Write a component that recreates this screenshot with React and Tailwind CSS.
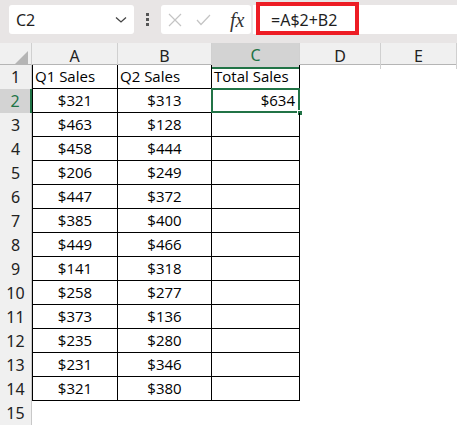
import React from 'react';

const data = [
  ['$321', '$313'],
  ['$463', '$128'],
  ['$458', '$444'],
  ['$206', '$249'],
  ['$447', '$372'],
  ['$385', '$400'],
  ['$449', '$466'],
  ['$141', '$318'],
  ['$258', '$277'],
  ['$373', '$136'],
  ['$235', '$280'],
  ['$231', '$346'],
  ['$321', '$380'],
];

const cols = ['A', 'B', 'C', 'D', 'E'];
const ui = { fontFamily: '"Noto Sans", "Open Sans", sans-serif' };
const cellFont = { fontFamily: '"Open Sans", "Noto Sans", sans-serif' };

function FormulaBar() {
  return (
    <div className="relative flex h-[43px] items-start bg-[#e8e5e5] pt-[5px]">
      <div className="ml-[9px] flex h-[29px] w-[125px] items-center justify-between rounded-[3px] bg-white pl-[7px] pr-[7px]">
        <span className="text-[16px] text-[#1f1f1f]" style={ui}>C2</span>
        <svg width="12" height="8" viewBox="0 0 12 8" fill="none" stroke="#444" strokeWidth="1.3">
          <path d="M1 1.5 L6 6 L11 1.5" />
        </svg>
      </div>
      <div className="flex h-[29px] w-[27px] flex-col items-center justify-center gap-[2px]">
        <span className="h-[3px] w-[3px] bg-[#555]"></span>
        <span className="h-[3px] w-[3px] bg-[#555]"></span>
        <span className="h-[3px] w-[3px] bg-[#555]"></span>
      </div>
      <div className="flex h-[29px] w-[90px] items-center rounded-[3px] bg-white pl-[7px]">
        <svg width="14" height="14" viewBox="0 0 14 14" stroke="#c4c4c4" strokeWidth="1.2">
          <path d="M1 1 L13 13 M13 1 L1 13" />
        </svg>
        <svg className="ml-[14px]" width="15" height="12" viewBox="0 0 15 12" fill="none" stroke="#c4c4c4" strokeWidth="1.2">
          <path d="M1 6 L5 10.5 L14 1" />
        </svg>
        <span className="ml-[19px] text-[20px] italic leading-none text-[#333]" style={{ fontFamily: '"Liberation Serif", serif' }}>
          fx
        </span>
      </div>
      <div className="ml-[2px] flex h-[29px] flex-1 items-center bg-white pl-[18px]">
        <span className="text-[16px] text-[#1f1f1f]" style={ui}>=A$2+B2</span>
      </div>
      <div className="pointer-events-none absolute left-[256px] top-[2px] h-[33px] w-[103px] border-4 border-[#ed1c24]"></div>
    </div>
  );
}

function HeaderRow() {
  return (
    <div className="grid h-[22px] grid-cols-[32px_86px_94px_88px_81px_76px] border-b border-[#b5b5b5] bg-[#f0f0f0]" style={ui}>
      <div className="flex items-end justify-end border-r border-[#d0d0d0] pb-[2px] pr-[3px]">
        <svg width="16" height="16" viewBox="0 0 16 16">
          <polygon points="16,0 16,16 0,16" fill="#b5b5b5" />
        </svg>
      </div>
      {cols.map((c) => (
        <div
          key={c}
          className={
            c === 'C'
              ? 'flex items-center justify-center border-r border-[#d0d0d0] border-b-2 border-b-[#217346] bg-[#d3d3d3] text-[16px] text-[#217346]'
              : 'flex items-center justify-center border-r border-[#d0d0d0] text-[16px] text-[#222]'
          }
        >
          {c}
        </div>
      ))}
    </div>
  );
}

function RowHead({ n }) {
  const sel = n === 2;
  return (
    <div
      className={
        sel
          ? 'flex items-center justify-center border-r-2 border-[#217346] bg-[#d3d3d3] text-[16px] text-[#217346]'
          : 'flex items-center justify-center border-r border-[#c8c8c8] bg-[#f0f0f0] text-[16px] text-[#222]'
      }
      style={ui}
    >
      {n}
    </div>
  );
}

export default function App() {
  return (
    <div className="h-[427px] w-[457px] overflow-hidden bg-white">
      <FormulaBar />
      <HeaderRow />
      <div className="grid grid-cols-[32px_86px_94px_88px_81px_76px] auto-rows-[24px] text-[15px] text-black" style={cellFont}>
        <RowHead n={1} />
        <div className="flex items-center border-b border-l border-r border-black pl-[2px]">Q1 Sales</div>
        <div className="flex items-center border-b border-r border-black pl-[2px]">Q2 Sales</div>
        <div className="flex items-center border-b border-r border-black pl-[2px]">Total Sales</div>
        <div></div>
        <div></div>
        {data.map((row, i) => (
          <React.Fragment key={i}>
            <RowHead n={i + 2} />
            <div className="flex items-center justify-center border-b border-l border-r border-black">{row[0]}</div>
            <div className="flex items-center justify-center border-b border-r border-black">{row[1]}</div>
            <div className="relative flex items-center justify-end border-b border-r border-black pr-[4px]">
              {i === 0 && (
                <>
                  $634
                  <div className="absolute -left-px -top-px bottom-[-1px] right-[-1px] border-2 border-[#217346]"></div>
                  <div className="absolute bottom-[-4px] right-[-4px] h-[6px] w-[6px] border border-white bg-[#217346]"></div>
                </>
              )}
            </div>
            <div></div>
            <div></div>
          </React.Fragment>
        ))}
        <RowHead n={15} />
        <div></div>
        <div></div>
        <div></div>
        <div></div>
        <div></div>
      </div>
    </div>
  );
}
